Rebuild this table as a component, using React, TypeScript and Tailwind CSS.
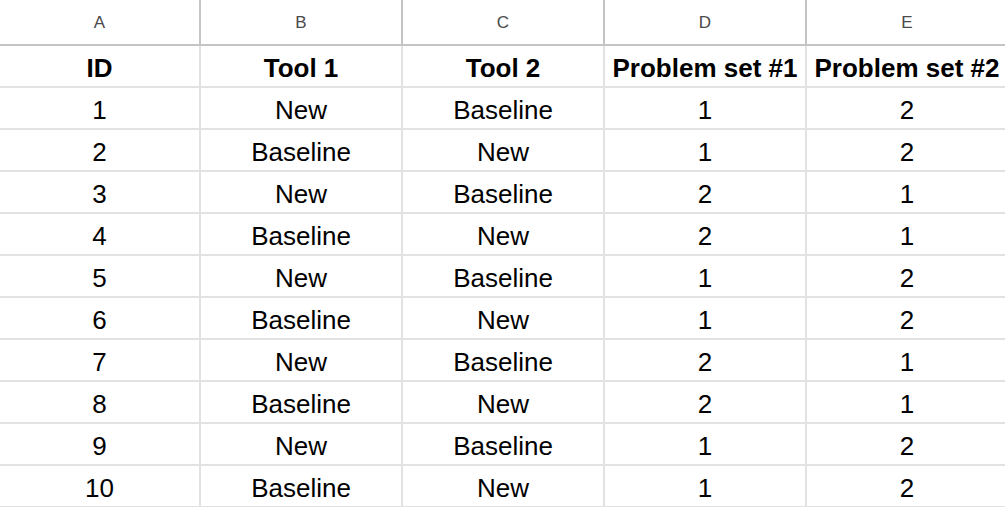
import React from "react";

const letters = ["A", "B", "C", "D", "E"];
const header = ["ID", "Tool 1", "Tool 2", "Problem set #1", "Problem set #2"];

const rows = Array.from({ length: 10 }, (_, i) => {
  const odd = i % 2 === 0;
  const firstPair = Math.floor(i / 2) % 2 === 0;
  return [
    String(i + 1),
    odd ? "New" : "Baseline",
    odd ? "Baseline" : "New",
    firstPair ? "1" : "2",
    firstPair ? "2" : "1",
  ];
});

const cols = "grid grid-cols-[201px_202px_202px_202px_202px]";

export default function App() {
  return (
    <div className="w-[1005px] h-[507px] overflow-hidden bg-white font-['Liberation_Sans',Arial,sans-serif]">
      {/* column letters */}
      <div className={cols}>
        {letters.map((l) => (
          <div
            key={l}
            className="h-[46px] flex items-center justify-center pt-[2px] border-r-2 border-b-2 border-[#c4c4c4] text-[17px] text-[#4a4a4a]"
          >
            {l}
          </div>
        ))}
      </div>

      {/* header row */}
      <div className={cols}>
        {header.map((h) => (
          <div
            key={h}
            className="h-[42px] flex items-center justify-center pt-[4px] border-r-2 border-b-2 border-[#e2e2e2] text-[26px] font-bold text-black whitespace-nowrap"
          >
            {h}
          </div>
        ))}
      </div>

      {rows.map((r, i) => (
        <div key={i} className={cols}>
          {r.map((c, j) => (
            <div
              key={j}
              className="h-[42px] flex items-center justify-center pt-[4px] border-r-2 border-b-2 border-[#e2e2e2] text-[26px] text-black"
            >
              {c}
            </div>
          ))}
        </div>
      ))}
    </div>
  );
}
